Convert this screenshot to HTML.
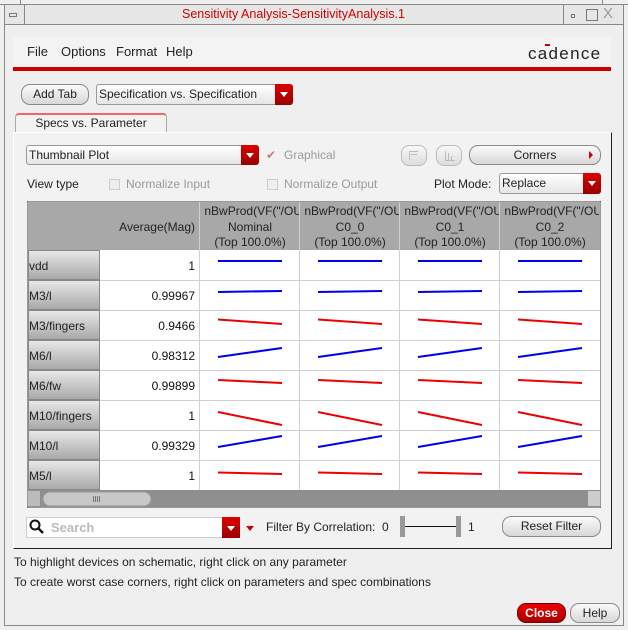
<!DOCTYPE html>
<html><head><style>
*{box-sizing:border-box;margin:0;padding:0}
body{width:628px;height:630px;background:#efefef;font-family:"Liberation Sans","DejaVu Sans",sans-serif;font-size:12px;color:#222;position:relative;overflow:hidden}
.a{position:absolute}
.btn{position:absolute;border:1px solid #8a8a8a;border-radius:9px;background:linear-gradient(#fafafa,#d8d8d8);text-align:center;font-size:12px;color:#222}
.dd{position:absolute;border:1px solid #999;border-radius:3px;background:linear-gradient(#fff,#e6e6e6);font-size:12px;padding-left:2px}
.dd .ar{position:absolute;right:-1px;top:-1px;bottom:-1px;width:18px;background:linear-gradient(#d00,#900);border-radius:0 3px 3px 0}
.dd .ar:after{content:"";position:absolute;left:5px;top:8px;border-left:4px solid transparent;border-right:4px solid transparent;border-top:5px solid #fff}
.gray{color:#9a9a9a}
.cb{position:absolute;width:11px;height:11px;border:1px solid #ccc;background:#eee}
</style></head><body>
<!-- window frame -->
<div class="a" style="left:0;top:4px;width:628px;height:1px;background:#888"></div>
<div class="a" style="left:4px;top:4px;width:1px;height:622px;background:#888"></div>
<div class="a" style="left:623px;top:4px;width:1px;height:622px;background:#888"></div>
<div class="a" style="left:4px;top:625px;width:620px;height:1px;background:#888"></div>
<div class="a" style="left:20px;top:0;width:1px;height:5px;background:#888"></div>
<div class="a" style="left:602px;top:0;width:1px;height:5px;background:#888"></div>
<div class="a" style="left:5px;top:5px;width:618px;height:20px;background:#e6e6e6;border-bottom:1px solid #888"></div>
<div class="a" style="left:24px;top:5px;width:1px;height:20px;background:#888"></div>
<div class="a" style="left:563px;top:5px;width:1px;height:20px;background:#888"></div>
<div class="a" style="left:9px;top:13px;width:8px;height:4px;border:1px solid #777"></div>
<div class="a" style="left:24px;top:7px;width:539px;text-align:center;color:#d00000;font-size:12.5px">Sensitivity Analysis-SensitivityAnalysis.1</div>
<div class="a" style="left:571px;top:14px;width:4px;height:4px;border:1px solid #777"></div>
<div class="a" style="left:586px;top:9px;width:12px;height:12px;border:1px solid #777"></div>
<div class="a" style="left:603px;top:5px;font-size:15px;color:#999">X</div>
<!-- menu -->
<div class="a" style="left:13px;top:37px;width:598px;height:32px;background:#f3f3f3"></div>
<div class="a" style="left:27px;top:44px;font-size:13px">File</div>
<div class="a" style="left:61px;top:44px;font-size:13px">Options</div>
<div class="a" style="left:116px;top:44px;font-size:13px">Format</div>
<div class="a" style="left:166px;top:44px;font-size:13px">Help</div>
<div class="a" style="left:528px;top:44px;font-size:17px;letter-spacing:1.3px;color:#222">cadence</div>
<div class="a" style="left:545px;top:44px;width:5px;height:2px;background:#c00"></div>
<div class="a" style="left:13px;top:67px;width:598px;height:4px;background:#cc0000"></div>
<!-- add tab -->
<div class="btn" style="left:21px;top:84px;width:68px;height:21px;line-height:19px">Add Tab</div>
<div class="dd" style="left:96px;top:84px;width:197px;height:21px;line-height:19px">Specification vs. Specification<div class="ar"></div></div>
<!-- tab -->
<div class="a" style="left:15px;top:113px;width:152px;height:20px;border:1px solid #aaa;border-top:2px solid #e66;border-bottom:none;border-radius:4px 4px 0 0;background:#f2f2f2;text-align:center;line-height:17px">Specs vs. Parameter</div>
<!-- panel -->
<div class="a" style="left:13px;top:132px;width:599px;height:417px;border:1px solid #fff;border-right:1px solid #222;border-bottom:1px solid #222;background:#f2f2f2"></div>
<div class="dd" style="left:26px;top:145px;width:233px;height:20px;line-height:18px">Thumbnail Plot<div class="ar"></div></div>
<div class="a" style="left:266px;top:148px;color:#c77;font-size:12px">✔</div>
<div class="a gray" style="left:284px;top:148px">Graphical</div>
<div class="a" style="left:401px;top:145px;width:26px;height:21px;border:1px solid #bbb;border-radius:8px;background:linear-gradient(#f8f8f8,#ddd)"><div class="a" style="left:7px;top:5px;width:9px;height:9px;border-left:1px solid #bbb;border-top:1px solid #bbb"></div><div class="a" style="left:9px;top:8px;width:6px;height:1px;background:#bbb"></div></div>
<div class="a" style="left:436px;top:145px;width:26px;height:21px;border:1px solid #bbb;border-radius:8px;background:linear-gradient(#f8f8f8,#ddd)"><div class="a" style="left:8px;top:5px;width:10px;height:10px;border-left:1px solid #bbb;border-bottom:1px solid #bbb"></div><div class="a" style="left:11px;top:7px;width:1px;height:7px;background:#bbb"></div><div class="a" style="left:14px;top:10px;width:1px;height:4px;background:#bbb"></div></div>
<div class="btn" style="left:469px;top:145px;width:132px;height:20px;line-height:18px">Corners<span style="position:absolute;right:7px;top:5px;border-top:4px solid transparent;border-bottom:4px solid transparent;border-left:4px solid #c00"></span></div>
<div class="a" style="left:27px;top:177px">View type</div>
<div class="cb" style="left:109px;top:179px"></div>
<div class="a gray" style="left:126px;top:177px">Normalize Input</div>
<div class="cb" style="left:267px;top:179px"></div>
<div class="a gray" style="left:284px;top:177px">Normalize Output</div>
<div class="a" style="left:434px;top:177px">Plot Mode:</div>
<div class="dd" style="left:499px;top:173px;width:102px;height:21px;line-height:19px">Replace<div class="ar"></div></div>
<!-- table -->
<svg class="a" style="left:27px;top:201px" width="574" height="307" viewBox="27 201 574 307" font-family="Liberation Sans, sans-serif" font-size="12">
<defs><linearGradient id="rh" x1="0" y1="0" x2="0" y2="1"><stop offset="0" stop-color="#e8e8e8"/><stop offset="1" stop-color="#a8a8a8"/></linearGradient>
<clipPath id="c1"><rect x="200" y="202" width="99" height="48"/></clipPath>
<clipPath id="c2"><rect x="300" y="202" width="99" height="48"/></clipPath>
<clipPath id="c3"><rect x="400" y="202" width="99" height="48"/></clipPath>
<clipPath id="c4"><rect x="500" y="202" width="99" height="48"/></clipPath>
</defs>
<rect x="27" y="201" width="574" height="307" fill="#fff" stroke="#333"/>
<rect x="28" y="202" width="572" height="48" fill="#a8a8a8"/>
<g fill="#222" text-anchor="middle">
<text x="195" y="231" text-anchor="end">Average(Mag)</text>
<text y="215" clip-path="url(#c1)" text-anchor="end"><tspan x="302">nBwProd(VF("/OU</tspan></text><text x="250" y="231">Nominal</text><text x="250" y="246">(Top 100.0%)</text>
<text y="215" clip-path="url(#c2)" text-anchor="end"><tspan x="402">nBwProd(VF("/OU</tspan></text><text x="350" y="231">C0_0</text><text x="350" y="246">(Top 100.0%)</text>
<text y="215" clip-path="url(#c3)" text-anchor="end"><tspan x="502">nBwProd(VF("/OU</tspan></text><text x="450" y="231">C0_1</text><text x="450" y="246">(Top 100.0%)</text>
<text y="215" clip-path="url(#c4)" text-anchor="end"><tspan x="602">nBwProd(VF("/OU</tspan></text><text x="550" y="231">C0_2</text><text x="550" y="246">(Top 100.0%)</text>
</g>
<g stroke="#d0d0d0"><line x1="199.5" y1="202" x2="199.5" y2="490"/><line x1="299.5" y1="202" x2="299.5" y2="490"/><line x1="399.5" y1="202" x2="399.5" y2="490"/><line x1="499.5" y1="202" x2="499.5" y2="490"/>
<line x1="100" y1="280.5" x2="600" y2="280.5"/><line x1="100" y1="310.5" x2="600" y2="310.5"/><line x1="100" y1="340.5" x2="600" y2="340.5"/><line x1="100" y1="370.5" x2="600" y2="370.5"/><line x1="100" y1="400.5" x2="600" y2="400.5"/><line x1="100" y1="430.5" x2="600" y2="430.5"/><line x1="100" y1="460.5" x2="600" y2="460.5"/></g>
<rect x="28" y="250" width="71" height="240" fill="url(#rh)"/>
<g fill="url(#rh)" stroke="#888">
<rect x="28.5" y="250.5" width="71" height="29"/><rect x="28.5" y="280.5" width="71" height="29"/><rect x="28.5" y="310.5" width="71" height="29"/><rect x="28.5" y="340.5" width="71" height="29"/><rect x="28.5" y="370.5" width="71" height="29"/><rect x="28.5" y="400.5" width="71" height="29"/><rect x="28.5" y="430.5" width="71" height="29"/><rect x="28.5" y="460.5" width="71" height="29"/>
</g>
<g fill="#222">
<text x="29" y="270">vdd</text><text x="29" y="300">M3/l</text><text x="29" y="330">M3/fingers</text><text x="29" y="360">M6/l</text><text x="29" y="390">M6/fw</text><text x="29" y="420">M10/fingers</text><text x="29" y="450">M10/l</text><text x="29" y="480">M5/l</text>
</g>
<g fill="#111" text-anchor="end">
<text x="195" y="270">1</text><text x="195" y="300">0.99967</text><text x="195" y="330">0.9466</text><text x="195" y="360">0.98312</text><text x="195" y="390">0.99899</text><text x="195" y="420">1</text><text x="195" y="450">0.99329</text><text x="195" y="480">1</text>
</g>
<g stroke-width="2" fill="none">
<g id="p"><path stroke="#0000ee" d="M218 261L282 261"/><path stroke="#0000ee" d="M218 292L282 291"/><path stroke="#ee0000" d="M218 319.5L282 324"/><path stroke="#0000ee" d="M218 357L282 348"/><path stroke="#ee0000" d="M218 380L282 383"/><path stroke="#ee0000" d="M218 412L282 425"/><path stroke="#0000ee" d="M218 447L282 436"/><path stroke="#ee0000" d="M218 472.5L282 474"/></g>
<use href="#p" x="100"/><use href="#p" x="200"/><use href="#p" x="300"/>
</g>
<rect x="28" y="490" width="572" height="17" fill="#8f8f8f"/>
<rect x="28" y="491" width="12" height="15" fill="#bbb"/><rect x="588" y="491" width="12" height="15" fill="#ccc"/>
<rect x="43" y="492" width="108" height="14" rx="7" fill="#c8c8c8" stroke="#999"/>
<g stroke="#777"><line x1="93.5" y1="496" x2="93.5" y2="502"/><line x1="95.5" y1="496" x2="95.5" y2="502"/><line x1="97.5" y1="496" x2="97.5" y2="502"/><line x1="99.5" y1="496" x2="99.5" y2="502"/></g>
</svg>
<!-- search row -->
<div class="a" style="left:26px;top:517px;width:214px;height:21px;background:#fff;border:1px solid #ccc"></div>
<svg class="a" style="left:29px;top:519px" width="16" height="16"><circle cx="6" cy="6" r="4.5" fill="none" stroke="#111" stroke-width="2"/><line x1="9" y1="9" x2="14" y2="14" stroke="#111" stroke-width="2.5"/></svg>
<div class="a" style="left:51px;top:520px;color:#bbb;font-weight:bold;font-size:13px">Search</div>
<div class="a" style="left:222px;top:517px;width:18px;height:21px;background:linear-gradient(#d00,#900)"></div>
<div class="a" style="left:227px;top:526px;border-left:4px solid transparent;border-right:4px solid transparent;border-top:5px solid #fff"></div>
<div class="a" style="left:246px;top:526px;border-left:4px solid transparent;border-right:4px solid transparent;border-top:5px solid #c00"></div>
<div class="a" style="left:266px;top:520px">Filter By Correlation:&nbsp; 0</div>
<div class="a" style="left:400px;top:516px;width:5px;height:21px;background:#999"></div>
<div class="a" style="left:405px;top:526px;width:51px;height:1px;background:#111"></div>
<div class="a" style="left:456px;top:516px;width:5px;height:21px;background:#999"></div>
<div class="a" style="left:468px;top:520px">1</div>
<div class="btn" style="left:502px;top:516px;width:99px;height:21px;line-height:19px">Reset Filter</div>
<div class="a" style="left:14px;top:555px">To highlight devices on schematic, right click on any parameter</div>
<div class="a" style="left:14px;top:575px">To create worst case corners, right click on parameters and spec combinations</div>
<div class="btn" style="left:517px;top:603px;width:49px;height:20px;line-height:18px;background:linear-gradient(#e00,#a00);color:#fff;font-weight:bold;border-color:#700">Close</div>
<div class="btn" style="left:570px;top:603px;width:50px;height:20px;line-height:18px">Help</div>
</body></html>
